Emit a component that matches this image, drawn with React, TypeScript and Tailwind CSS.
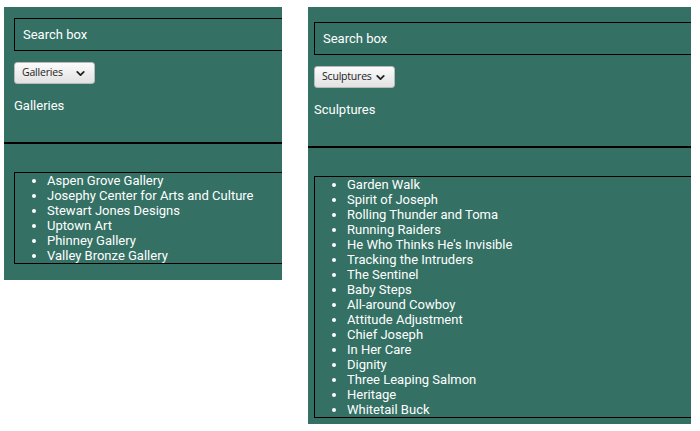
import { ChevronDown } from 'lucide-react';

const GALLERIES = [
  'Aspen Grove Gallery',
  'Josephy Center for Arts and Culture',
  'Stewart Jones Designs',
  'Uptown Art',
  'Phinney Gallery',
  'Valley Bronze Gallery',
];

const SCULPTURES = [
  'Garden Walk',
  'Spirit of Joseph',
  'Rolling Thunder and Toma',
  'Running Raiders',
  "He Who Thinks He's Invisible",
  'Tracking the Intruders',
  'The Sentinel',
  'Baby Steps',
  'All-around Cowboy',
  'Attitude Adjustment',
  'Chief Joseph',
  'In Her Care',
  'Dignity',
  'Three Leaping Salmon',
  'Heritage',
  'Whitetail Buck',
];

function Dropdown({ label }: { label: string }) {
  return (
    <div className="flex h-[22px] w-[81px] items-center justify-between rounded-[3px] border border-[#b9b9b9] bg-gradient-to-b from-[#fbfbfb] to-[#e2e2e2] pl-[7px] pr-[7px] text-[10.5px] tracking-[-0.2px] text-[#222] font-['Open_Sans',sans-serif]">
      <span>{label}</span>
      <ChevronDown size={13} strokeWidth={3.4} className="text-[#222]" />
    </div>
  );
}

function Panel({
  title,
  items,
  pad,
  boxTop,
  bottom,
  width,
}: {
  title: string;
  items: string[];
  pad: string;
  boxTop: string;
  bottom: string;
  width: string;
}) {
  return (
    <div className={`overflow-hidden bg-[#347164] text-white ${width}`}>
      <div className={pad}>
        {/* Search */}
        <div className={`${boxTop} flex h-[33px] w-[420px] items-center border border-black pl-[8px] text-[13px]`}>
          Search box
        </div>
        <div className="mt-[11px]">
          <Dropdown label={title} />
        </div>
        <p className="mt-[14px] text-[13px] leading-[16px]">{title}</p>
      </div>
      <div className="mt-[28px] h-[2px] bg-black" />
      <div className={pad}>
        <ul className="mt-[28px] w-[420px] list-disc border border-black pl-[32px] text-[13px] leading-[15px]">
          {items.map((item) => (
            <li key={item}>{item}</li>
          ))}
        </ul>
      </div>
      <div className={bottom} />
    </div>
  );
}

export default function App() {
  return (
    <div className="flex items-start bg-white pt-[7px] font-['Roboto',sans-serif]" style={{ height: 431 }}>
      <div className="ml-[4px]">
        <Panel title="Galleries" items={GALLERIES} pad="px-[10px]" boxTop="mt-[11px]" bottom="h-[16px]" width="w-[278px]" />
      </div>
      <div className="ml-[26px]">
        <Panel title="Sculptures" items={SCULPTURES} pad="px-[6px]" boxTop="mt-[15px]" bottom="h-[6px]" width="w-[383px]" />
      </div>
    </div>
  );
}
